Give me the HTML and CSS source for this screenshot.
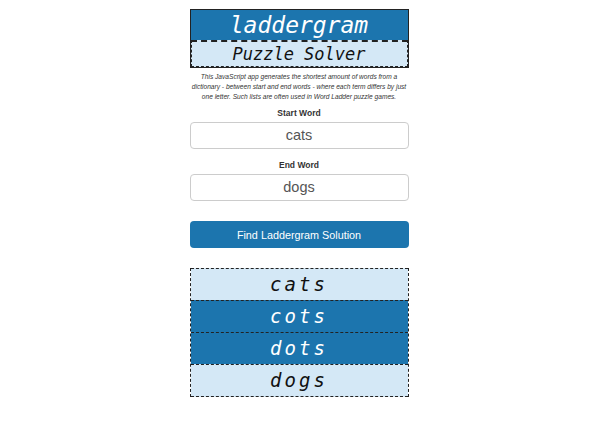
FILE: index.html
```html
<!DOCTYPE html>
<html>
<head>
<meta charset="utf-8">
<link rel="stylesheet" href="styles.css">
</head>
<body>
<div class="app">
  <div class="header">
    <div class="title">laddergram</div>
    <div class="subtitle">Puzzle Solver</div>
  </div>
  <p class="desc">This JavaScript app generates the shortest amount of words from a dictionary - between start and end words - where each term differs by just one letter. Such lists are often used in Word Ladder puzzle games.</p>
  <label class="label">Start Word</label>
  <div class="input">cats</div>
  <label class="label">End Word</label>
  <div class="input">dogs</div>
  <button class="btn">Find Laddergram Solution</button>
  <div class="results">
    <div class="word light">cats</div>
    <div class="word dark">cots</div>
    <div class="word dark">dots</div>
    <div class="word light">dogs</div>
  </div>
</div>
</body>
</html>
```
FILE: styles.css
```css
html, body { margin: 0; padding: 0; background: #fff; }
body { font-family: "Liberation Sans", Arial, sans-serif; color: #333; }
.app { width: 219px; margin: 9px auto 0; display: flex; flex-direction: column; }
.header { border: 1px solid #222; background: #1c75ae; }
.title { height: 30px; line-height: 30px; text-align: center; color: #fff; font-family: "DejaVu Sans Mono", monospace; font-style: italic; font-size: 23px; }
.subtitle { height: 24px; line-height: 24px; text-align: center; color: #111; background: #d4e8f6; border: 1px dashed #222; border-top-width: 2px; font-family: "DejaVu Sans Mono", monospace; font-style: italic; font-size: 17px; }
.desc { margin: 4px 0 0; font-size: 6.6px; line-height: 10px; font-style: italic; text-align: center; color: #333; }
.label { display: block; margin-top: 6px; text-align: center; font-weight: bold; font-size: 8.5px; line-height: 10px; color: #333; }
.input { margin-top: 4px; height: 25px; line-height: 25px; border: 1px solid #ccc; border-radius: 4px; text-align: center; font-size: 14.5px; color: #555; }
.input + .label { margin-top: 11px; }
.btn { margin-top: 20px; height: 27px; border: 0; border-radius: 4px; background: #1c75ae; color: #fff; font-family: "Liberation Sans", Arial, sans-serif; font-size: 10.8px; padding: 0; }
.results { margin-top: 20px; border-left: 1px dashed #222; border-right: 1px dashed #222; }
.word { height: 31px; line-height: 31px; text-align: center; border-top: 1px dashed #222; font-family: "DejaVu Sans Mono", monospace; font-style: italic; font-size: 19px; letter-spacing: 3px; }
.word:last-child { border-bottom: 1px dashed #222; }
.light { background: #d4e8f6; color: #111; }
.dark { background: #1c75ae; color: #fff; }
```
